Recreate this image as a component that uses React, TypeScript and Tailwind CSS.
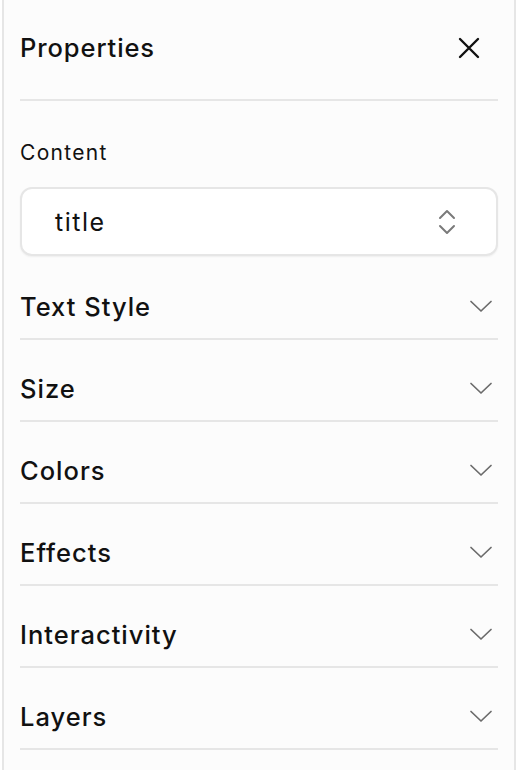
import React from 'react';

const sections = ['Text Style', 'Size', 'Colors', 'Effects', 'Interactivity', 'Layers'];

const ChevronDown = () => (
  <svg width="24" height="14" viewBox="0 0 24 14" fill="none" stroke="#6b6b6b" strokeWidth="1.7" strokeLinecap="round" strokeLinejoin="round">
    <path d="M2 2.5l10 9.5 10-9.5" />
  </svg>
);

const ChevronsUpDown = () => (
  <svg width="18" height="28" viewBox="0 0 18 28" fill="none" stroke="#7a7a7a" strokeWidth="2" strokeLinecap="round" strokeLinejoin="round">
    <path d="M2 10l7-7 7 7" />
    <path d="M2 18l7 7 7-7" />
  </svg>
);

const CloseIcon = () => (
  <svg width="22" height="22" viewBox="0 0 22 22" fill="none" stroke="#111111" strokeWidth="2.4" strokeLinecap="round">
    <path d="M2 2l18 18M20 2L2 20" />
  </svg>
);

const App: React.FC = () => {
  return (
    <div className="min-h-screen bg-white pl-[2px] pr-[2px] font-['Inter','Liberation_Sans',sans-serif] text-[#111111]">
      <aside className="min-h-[770px] w-[514px] border-x-2 border-[#e6e6e6] bg-[#fcfcfc] px-[16px]">
        {/* Header */}
        <header className="flex h-[101px] items-center justify-between border-b-2 border-[#e6e6e6] pb-[3px]">
          <h1 className="text-[25.5px] font-medium leading-[30px] tracking-[0.9px]">Properties</h1>
          <button type="button" className="mr-[18px] flex items-center">
            <CloseIcon />
          </button>
        </header>

        {/* Content field */}
        <div className="pt-[38px]">
          <label className="block text-[21px] leading-[28px] tracking-[1.3px]">Content</label>
          <div className="mt-[20px] flex h-[69px] items-center justify-between rounded-[12px] border-2 border-[#e6e6e6] bg-white pl-[33px] pr-[40px] shadow-[0_1px_2px_rgba(0,0,0,0.06)]">
            <span className="text-[25px] leading-[30px] tracking-[1.5px]">title</span>
            <ChevronsUpDown />
          </div>
        </div>

        {/* Collapsible sections */}
        <div className="mt-[2px]">
          {sections.map((s) => (
            <div key={s} className="flex h-[82px] items-start justify-between border-b-2 border-[#e6e6e6] pt-[36px]">
              <span className="text-[25.5px] font-medium leading-[26px] tracking-[1px]">{s}</span>
              <span className="mr-[5px] mt-[5px]">
                <ChevronDown />
              </span>
            </div>
          ))}
        </div>
      </aside>
    </div>
  );
};

export default App;
